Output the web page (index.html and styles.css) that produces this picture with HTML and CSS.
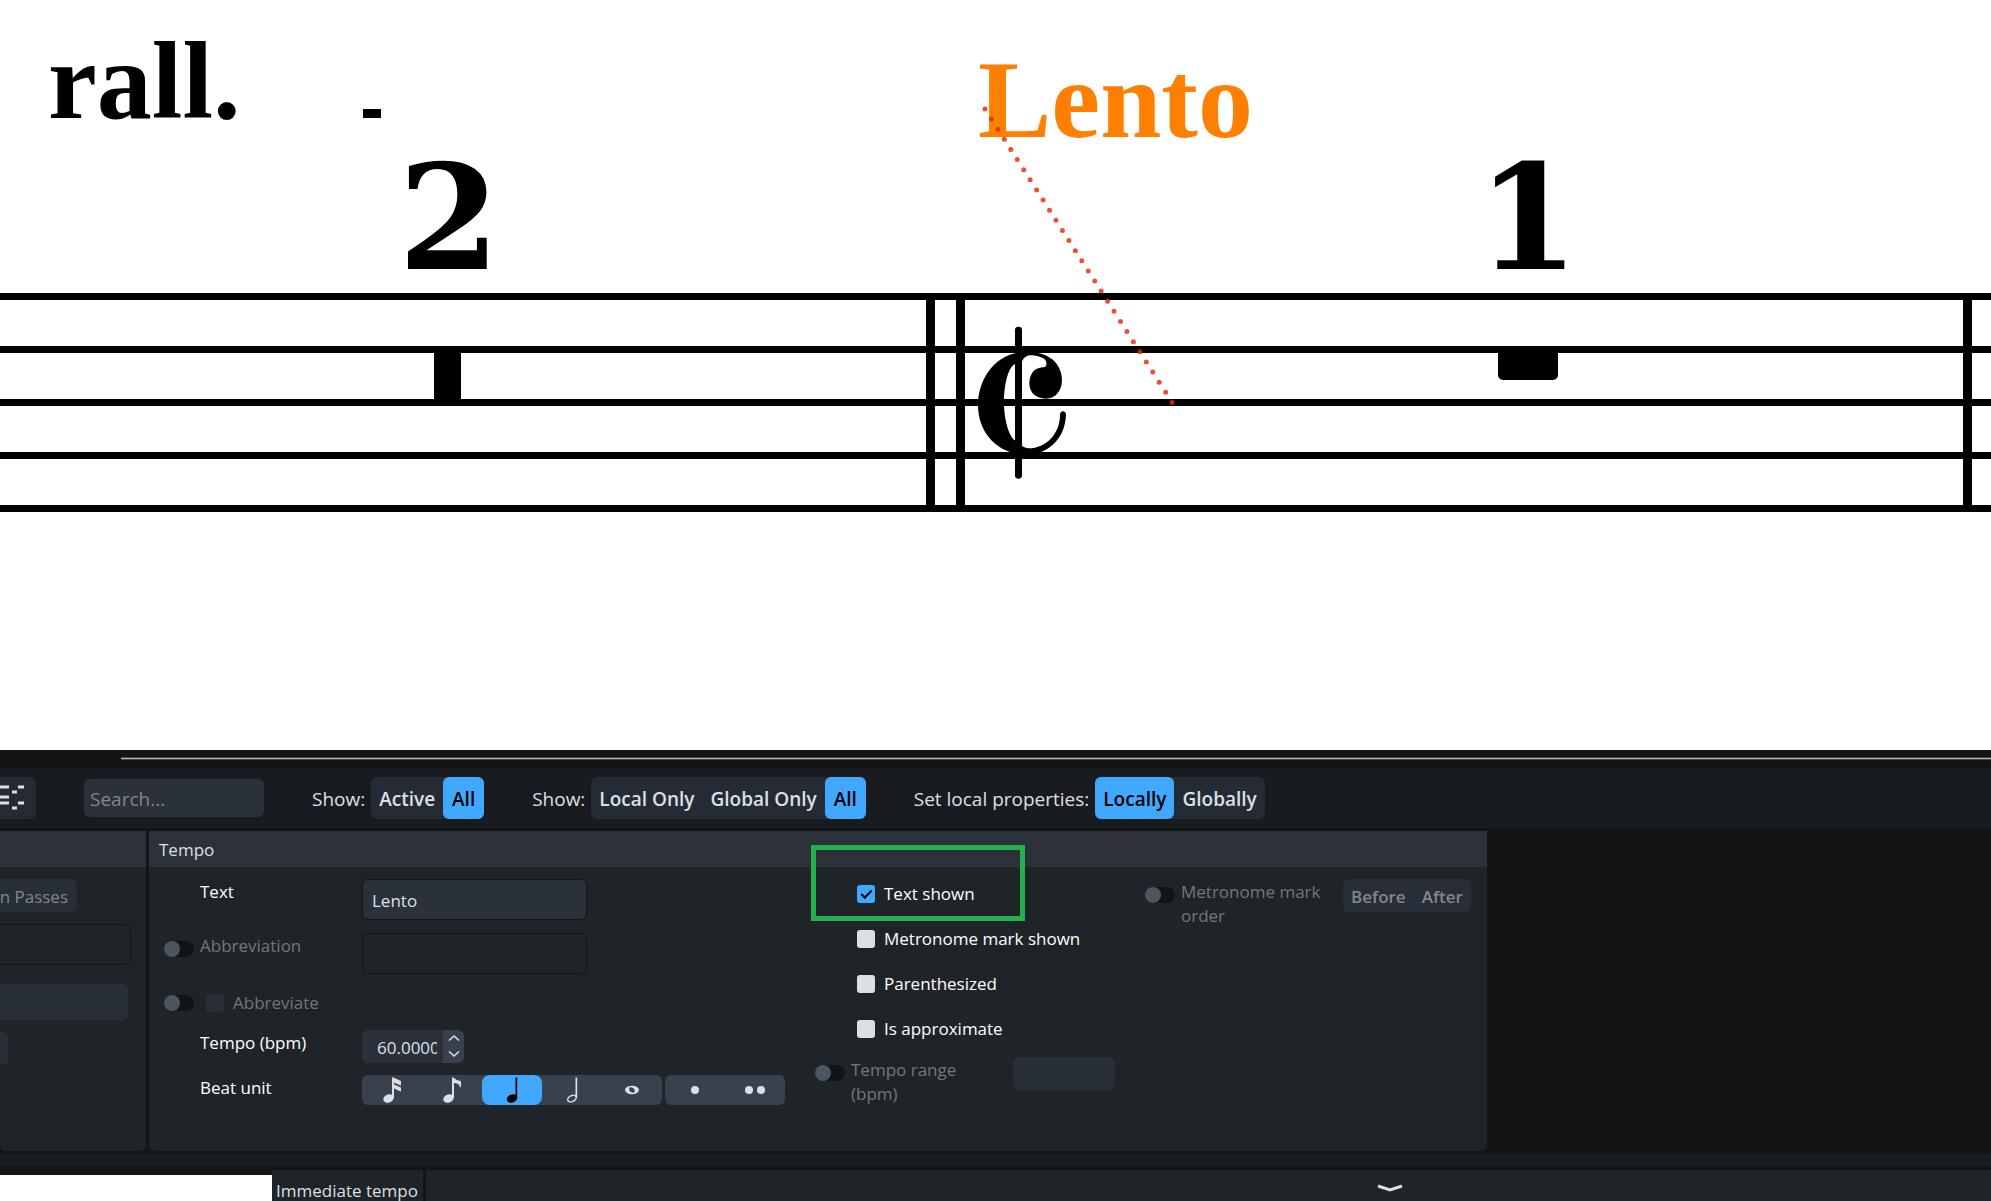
FILE: index.html
```html
<!DOCTYPE html>
<html lang="en">
<head>
  <meta charset="UTF-8">
  <meta name="viewport" content="width=device-width, initial-scale=1.0">
  <title>Score Editor</title>
  <link rel="stylesheet" href="styles.css">
</head>
<body>
  <main class="score">
    <svg class="scoreCanvas" width="100%" height="100%">
      <!-- Staff lines -->
      <g class="ink">
        <rect x="0" y="293" width="100%" height="7"/>
        <rect x="0" y="346" width="100%" height="7"/>
        <rect x="0" y="399" width="100%" height="7"/>
        <rect x="0" y="452" width="100%" height="7"/>
        <rect x="0" y="505" width="100%" height="7"/>
      </g>

      <!-- Barlines -->
      <g class="ink">
        <rect x="926" y="293" width="9" height="219"/>
        <rect x="956" y="293" width="9" height="219"/>
        <rect x="1963" y="293" width="9" height="219"/>
      </g>

      <!-- Rests -->
      <rect class="ink" x="434" y="346" width="27" height="60"/>
      <rect class="ink" x="1498" y="346" width="60" height="34" rx="5"/>

      <!-- Cut time -->
      <g class="ink" transform="translate(950 300) scale(0.3333)">
        <rect x="195" y="80" width="21" height="456" rx="10"/>
        <path d="M235 157C140 150 84 235 84 315C84 400 145 466 235 464C290 462 345 420 348 345C348 330 330 330 330 345C330 400 290 445 235 445C228 444 222 442 217 438L190 418C172 395 162 350 162 308C162 260 172 210 190 195L217 182C225 168 235 165 248 166C280 170 292 180 289 195C286 204 280 201 270 203C250 207 238 225 238 250C238 280 260 296 287 296C318 296 336 270 336 240C336 195 300 155 235 157Z"/>
      </g>

      <text class="tempoText" x="48" y="118">rall.</text>
      <rect class="ink" x="363" y="109" width="18" height="9"/>
      <text class="barCount" x="449" y="269">2</text>
      <text class="barCount" x="1528" y="269">1</text>
      <text class="tempoText selected" x="978" y="137">Lento</text>
      <line class="attachLine" x1="985" y1="109" x2="1172.5" y2="403"/>
    </svg>
  </main>

  <section class="lowerZone">
    <div class="resizeBar"></div>

    <div class="toolbar">
      <button class="iconButton" aria-label="Filter properties">
        <svg width="36" height="42">
          <path d="M0 10H9M18 10H24M12 15H17M0 20H9M0 26H9M18 26H24M12 31H17"/>
        </svg>
      </button>
      <input class="search" type="text" placeholder="Search..." aria-label="Search">
      <div class="filter">
        <span>Show:</span>
        <div class="segment">
          <button>Active</button>
          <button class="on">All</button>
        </div>
      </div>
      <div class="filter">
        <span>Show:</span>
        <div class="segment">
          <button>Local Only</button>
          <button>Global Only</button>
          <button class="on">All</button>
        </div>
      </div>
      <div class="filter">
        <span>Set local properties:</span>
        <div class="segment">
          <button class="on">Locally</button>
          <button>Globally</button>
        </div>
      </div>
    </div>

    <div class="groups">
      <div class="group previous">
        <h2 class="groupTitle"></h2>
        <div class="previousBody">
          <button class="passes" disabled>On Passes</button>
          <input class="field" type="text" aria-label="Passes">
          <select class="combo" disabled aria-label="Playback"></select>
          <button class="stub" disabled aria-label="Option"></button>
        </div>
      </div>

      <div class="group tempo">
        <h2 class="groupTitle">Tempo</h2>
        <div class="columns">
          <div class="mainColumn">
            <label class="name" for="text">Text</label>
            <input class="field value" id="text" type="text" value="Lento">

            <input class="toggle" type="checkbox" aria-label="Override abbreviation">
            <label class="name off" for="abbreviation">Abbreviation</label>
            <input class="field" id="abbreviation" type="text">

            <input class="toggle" type="checkbox" aria-label="Override abbreviate">
            <label class="check abbreviate off"><input type="checkbox" disabled>Abbreviate</label>

            <label class="name" for="tempo">Tempo (bpm)</label>
            <div class="spin value">
              <input id="tempo" type="text" value="60.0000">
              <div class="spinButtons">
                <button aria-label="Increase"><svg width="12" height="6"><path d="M1 5.5L6 1L11 5.5"/></svg></button>
                <button aria-label="Decrease"><svg width="12" height="6"><path d="M1 .5L6 5L11 .5"/></svg></button>
              </div>
            </div>

            <span class="name">Beat unit</span>
            <div class="beats value">
              <div class="beatGroup">
                <button aria-label="Sixteenth">
                  <svg width="60" height="30"><ellipse cx="26.5" cy="23.5" rx="5.4" ry="4" transform="rotate(-22 26.5 23.5)"/><path d="M30 2.5H31.5L39 6V10.5L37.5 10L32 7.5V9.5L39 12.5V16.5L37.5 16L32 13.5V23H30Z"/></svg>
                </button>
                <button aria-label="Eighth">
                  <svg width="60" height="30"><ellipse cx="26.5" cy="23.5" rx="5.4" ry="4" transform="rotate(-22 26.5 23.5)"/><path d="M30 2.5H31.5Q34 5 37 5.5L39 6.5V12H37.5V10Q35 8 32 8V23H30Z"/></svg>
                </button>
                <button class="on" aria-label="Quarter">
                  <svg width="60" height="30"><ellipse cx="30" cy="23.5" rx="5.4" ry="4" transform="rotate(-22 30 23.5)"/><path d="M33.5 2.5H35.2V23H33.5Z"/></svg>
                </button>
                <button aria-label="Half">
                  <svg width="60" height="30"><ellipse class="hollow" cx="30" cy="23.5" rx="4.6" ry="2.9" transform="rotate(-28 30 23.5)"/><path d="M33.5 2.5H35.2V23H33.5Z"/></svg>
                </button>
                <button aria-label="Whole">
                  <svg width="60" height="30"><path fill-rule="evenodd" d="M23 15a7 4.2 0 1 0 14 0a7 4.2 0 1 0-14 0ZM27.5 12.5C30 11 34 14.5 32.5 17.2C30 19 26 15.5 27.5 12.5Z"/></svg>
                </button>
              </div>
              <div class="beatGroup">
                <button aria-label="Dotted"><svg width="60" height="30"><circle cx="30" cy="15" r="4"/></svg></button>
                <button aria-label="Double dotted"><svg width="60" height="30"><circle cx="24" cy="15" r="4"/><circle cx="36" cy="15" r="4"/></svg></button>
              </div>
            </div>
          </div>

          <div class="checkColumn">
            <div class="checks">
              <label class="check highlighted"><input type="checkbox" checked>Text shown</label>
              <label class="check"><input type="checkbox">Metronome mark shown</label>
              <label class="check"><input type="checkbox">Parenthesized</label>
              <label class="check"><input type="checkbox">Is approximate</label>
            </div>
            <div class="optional">
              <input class="toggle" type="checkbox" aria-label="Override tempo range">
              <label class="name off" for="range">Tempo range (bpm)</label>
              <input class="range" id="range" type="text" disabled>
            </div>
          </div>

          <div class="optional">
            <input class="toggle" type="checkbox" aria-label="Override metronome mark order">
            <span class="name off">Metronome mark order</span>
            <div class="segment small">
              <button disabled>Before</button>
              <button disabled>After</button>
            </div>
          </div>
        </div>
      </div>
    </div>

    <footer class="statusBar">
      <div class="cover"></div>
      <div class="status">Immediate tempo</div>
      <div class="statusRest">
        <button class="collapse" aria-label="Hide lower zone">
          <svg width="26" height="9"><path d="M1 2L13 6L25 2"/></svg>
        </button>
      </div>
    </footer>
  </section>
</body>
</html>
```

FILE: styles.css
```css
*,
*::before,
*::after {
  box-sizing: border-box;
}

body {
  display: flex;
  flex-direction: column;
  height: 100vh;
  margin: 0;
  overflow: hidden;
  background-color: #131416;
  color: #dce0e6;
  font-family: "Open Sans", "Noto Sans", sans-serif;
  font-size: 17px;
  line-height: 24px;
}

button,
input,
select {
  margin: 0;
  border: none;
  color: inherit;
  font: inherit;
}

button {
  padding: 0;
  background: none;
}

svg {
  display: block;
}

/* Score */
.score {
  flex: 1;
  min-height: 0;
  background-color: #fff;
}

.ink,
.barCount {
  fill: #000;
}

.tempoText {
  font: bold 110px "Liberation Serif", serif;
}

.selected {
  fill: #ff8000;
}

.barCount {
  font: bold 146px "DejaVu Serif", serif;
  text-anchor: middle;
}

.attachLine {
  stroke: #ea2a05;
  stroke-width: 5;
  stroke-linecap: round;
  stroke-dasharray: 0 12;
  opacity: 0.82;
}

/* Lower zone */
.resizeBar {
  height: 18px;
  padding: 7px 0 0 121px;
}

.resizeBar::before {
  content: "";
  display: block;
  height: 3px;
  border: solid #45484a;
  border-width: 1px 0;
  background-color: #b4b6b8;
}

.toolbar {
  display: flex;
  align-items: center;
  gap: 48px;
  height: 60px;
  background-color: #181b20;
  font-size: 19px;
}

.iconButton {
  width: 36px;
  height: 42px;
  border-radius: 0 6px 6px 0;
  background-color: #252b34;
}

.iconButton path {
  stroke: #dce0e6;
  stroke-width: 3;
}

.search {
  width: 180px;
  height: 38px;
  padding: 2px 6px 0;
  border-radius: 6px;
  background-color: #2a313a;
}

.search::placeholder {
  color: #82868c;
}

.filter {
  display: flex;
  align-items: center;
  gap: 6px;
}

.filter > span {
  padding-top: 2px;
}

.segment {
  display: flex;
  border-radius: 6px;
  background-color: #252b34;
  font-weight: 600;
}

.segment button {
  min-width: 41px;
  height: 42px;
  padding: 2px 8px 0;
  border-radius: 6px;
}

.segment .on {
  background-color: #40a9ff;
  color: #000;
}

.groups {
  display: flex;
  gap: 3px;
  padding: 3px 0;
}

.group {
  height: 320px;
  overflow: hidden;
  border-radius: 0 0 6px 6px;
  background-color: #1f2428;
}

.groupTitle {
  height: 36px;
  margin: 0;
  padding: 7px 10px;
  background-color: #2d323a;
  font-size: 17px;
  font-weight: 500;
}

.previous {
  width: 146px;
}

.previousBody {
  display: flex;
  flex-direction: column;
  align-items: flex-start;
  gap: 12px;
  padding-top: 12px;
}

.previousBody .field {
  width: 139px;
  margin-left: -8px;
}

.passes {
  width: 97px;
  height: 33px;
  margin-left: -20px;
  padding: 2px 9px 0 0;
  border-radius: 6px;
  background-color: #272e37;
  color: #82868c;
  font-weight: 500;
  text-align: right;
  direction: rtl;
  white-space: nowrap;
}

.combo {
  width: 136px;
  height: 36px;
  margin: 7px 0 0 -8px;
  appearance: none;
  border-radius: 6px;
  background-color: #272e37;
  opacity: 1;
}

.stub {
  width: 16px;
  height: 33px;
  margin-left: -8px;
  border-radius: 6px;
  background-color: #272e37;
}

.columns {
  display: grid;
  grid-template-columns: 651px 330px 1fr;
  padding: 12px 15px;
}

.mainColumn {
  display: grid;
  grid-template-columns: 36px 162px 1fr;
  grid-template-rows: 42px 42px 31px 33px 30px;
  row-gap: 12px;
  align-items: start;
}

.name {
  grid-column: 2;
  padding-top: 1px;
  color: #fff;
  font-weight: 500;
}

.off {
  color: #72777b;
  font-weight: 400;
}

.field {
  width: 225px;
  height: 41px;
  padding: 2px 9px 0;
  border: 1px solid #131416;
  border-radius: 6px;
  background-color: transparent;
}

.field.value {
  background-color: #2a313a;
}

.value {
  grid-column: 3;
}

.toggle {
  width: 30px;
  height: 16px;
  margin-top: 8px;
  appearance: none;
  border-radius: 8px;
  background-color: #131416;
}

.toggle::before {
  content: "";
  display: block;
  width: 16px;
  height: 16px;
  border-radius: 50%;
  background-color: #4b5663;
}

.check {
  position: relative;
  display: flex;
  align-items: center;
  gap: 9px;
  color: #fff;
  font-weight: 500;
}

.check input {
  width: 18px;
  height: 18px;
  appearance: none;
  border-radius: 3px;
  background-color: #dce0e6;
}

.check input:disabled {
  background-color: #272e37;
}

.check input:checked {
  background-color: #40a9ff;
}

.check input:checked::before {
  content: "";
  display: block;
  width: 11px;
  height: 6px;
  margin: 5px 4px;
  border: solid #000;
  border-width: 0 0 2px 2px;
  transform: rotate(-45deg);
}

.check.off {
  color: #72777b;
  font-weight: 400;
}

.abbreviate {
  grid-column: 2 / 4;
  padding: 4px 0 0 6px;
}

.highlighted::after {
  content: "";
  position: absolute;
  top: -37px;
  left: -46px;
  width: 214px;
  height: 76px;
  border: 5px solid #22b14c;
}

.tempo {
  position: relative;
  width: 1338px;
}

.spin {
  display: flex;
  width: 102px;
  height: 33px;
  overflow: hidden;
  border-radius: 6px;
  background-color: #2a313a;
}

.spin input {
  width: 81px;
  padding: 3px 6px 0 15px;
  background: none;
}

.spinButtons {
  width: 21px;
  background-color: #38414d;
}

.spinButtons button {
  display: flex;
  align-items: center;
  justify-content: center;
  width: 21px;
  height: 16px;
}

.spinButtons path,
.collapse path {
  fill: none;
  stroke: #dce0e6;
  stroke-width: 1.5;
}

.beats {
  display: flex;
  gap: 3px;
}

.beatGroup {
  display: flex;
  border-radius: 6px;
  background-color: #38414d;
}

.beatGroup button {
  width: 60px;
  height: 30px;
  border-radius: 8px;
  fill: #dce0e6;
  stroke: none;
}

.beatGroup .on {
  background-color: #40a9ff;
  fill: #000;
}

.beatGroup .hollow {
  fill: none;
  stroke: #dce0e6;
  stroke-width: 1.5;
}

.checks {
  display: flex;
  flex-direction: column;
  align-items: flex-start;
  gap: 21px;
  padding: 3px 0 16px 42px;
}

.optional {
  display: flex;
  align-items: flex-start;
  gap: 6px;
}

.optional .name {
  width: 156px;
  padding-right: 14px;
}

.checkColumn .optional .name {
  padding-right: 48px;
}

.range {
  width: 102px;
  height: 33px;
  border-radius: 6px;
  background-color: #272e37;
}

.small {
  background-color: #272e37;
  color: #82868c;
}

.small button {
  height: 33px;
}

/* Status bar */
.statusBar {
  display: flex;
  gap: 3px;
  height: 47px;
  padding-top: 4px;
  border-top: 12px solid #181b20;
}

.cover {
  width: 272px;
  margin-top: 5px;
  background-color: #fff;
}

.status {
  margin-left: -3px;
  padding: 9px 5px 0 4px;
  background-color: #1f2428;
  white-space: nowrap;
}

.statusRest {
  flex: 1;
  padding: 14px 0 0 951px;
  background-color: #1f2428;
}

.collapse {
  display: block;
  width: 26px;
  height: 9px;
}

.collapse path {
  stroke-width: 3;
}
```
